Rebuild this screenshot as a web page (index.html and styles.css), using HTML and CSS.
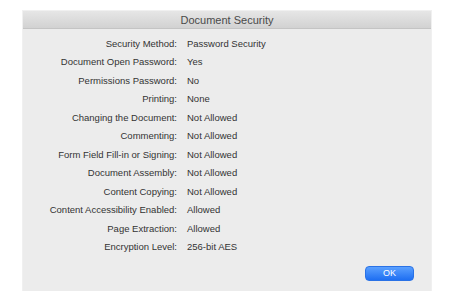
FILE: index.html
```html
<!DOCTYPE html>
<html lang="en">
<head>
  <meta charset="UTF-8" />
  <title>Document Security</title>
  <link rel="stylesheet" href="styles.css">
</head>
<body>
  <div class="dialog">
    <div class="title-bar">Document Security</div>

    <div class="details">
      <div class="label">Security Method:</div><div class="value">Password Security</div>
      <div class="label">Document Open Password:</div><div class="value">Yes</div>
      <div class="label">Permissions Password:</div><div class="value">No</div>
      <div class="label">Printing:</div><div class="value">None</div>
      <div class="label">Changing the Document:</div><div class="value">Not Allowed</div>
      <div class="label">Commenting:</div><div class="value">Not Allowed</div>
      <div class="label">Form Field Fill-in or Signing:</div><div class="value">Not Allowed</div>
      <div class="label">Document Assembly:</div><div class="value">Not Allowed</div>
      <div class="label">Content Copying:</div><div class="value">Not Allowed</div>
      <div class="label">Content Accessibility Enabled:</div><div class="value">Allowed</div>
      <div class="label">Page Extraction:</div><div class="value">Allowed</div>
      <div class="label">Encryption Level:</div><div class="value">256-bit AES</div>
    </div>

    <div class="footer">
      <button class="ok-btn">OK</button>
    </div>
  </div>
</body>
</html>
```

FILE: styles.css
```css
body {
  margin: 0;
  background: #ffffff;
  font-family: "Liberation Sans", Arial, sans-serif;
}

.dialog {
  margin: 11px 0 0 23px;
  width: 408px;
  height: 280px;
  background: #ececec;
  box-shadow: 0 0 0 1px rgba(0, 0, 0, 0.06);
  display: flex;
  flex-direction: column;
}

.title-bar {
  height: 18px;
  line-height: 18px;
  text-align: center;
  font-size: 11px;
  color: #4a4a4a;
  background: linear-gradient(#e6e6e6, #d2d2d2);
  border-bottom: 1px solid #c4c4c4;
  box-sizing: border-box;
}

.details {
  display: grid;
  grid-template-columns: 154px 1fr;
  column-gap: 10px;
  padding-top: 6px;
  font-size: 9.5px;
  line-height: 18.45px;
  color: #333333;
}

.label {
  text-align: right;
}

.footer {
  display: flex;
  justify-content: flex-end;
  padding: 10px 17px 0 0;
}

.ok-btn {
  width: 49px;
  height: 15px;
  padding: 0;
  border: 1px solid #2a72e6;
  border-radius: 4px;
  background: linear-gradient(#5aa0ff, #1f6ff2);
  color: #ffffff;
  font-family: "Liberation Sans", Arial, sans-serif;
  font-size: 9px;
  line-height: 13px;
}
```
